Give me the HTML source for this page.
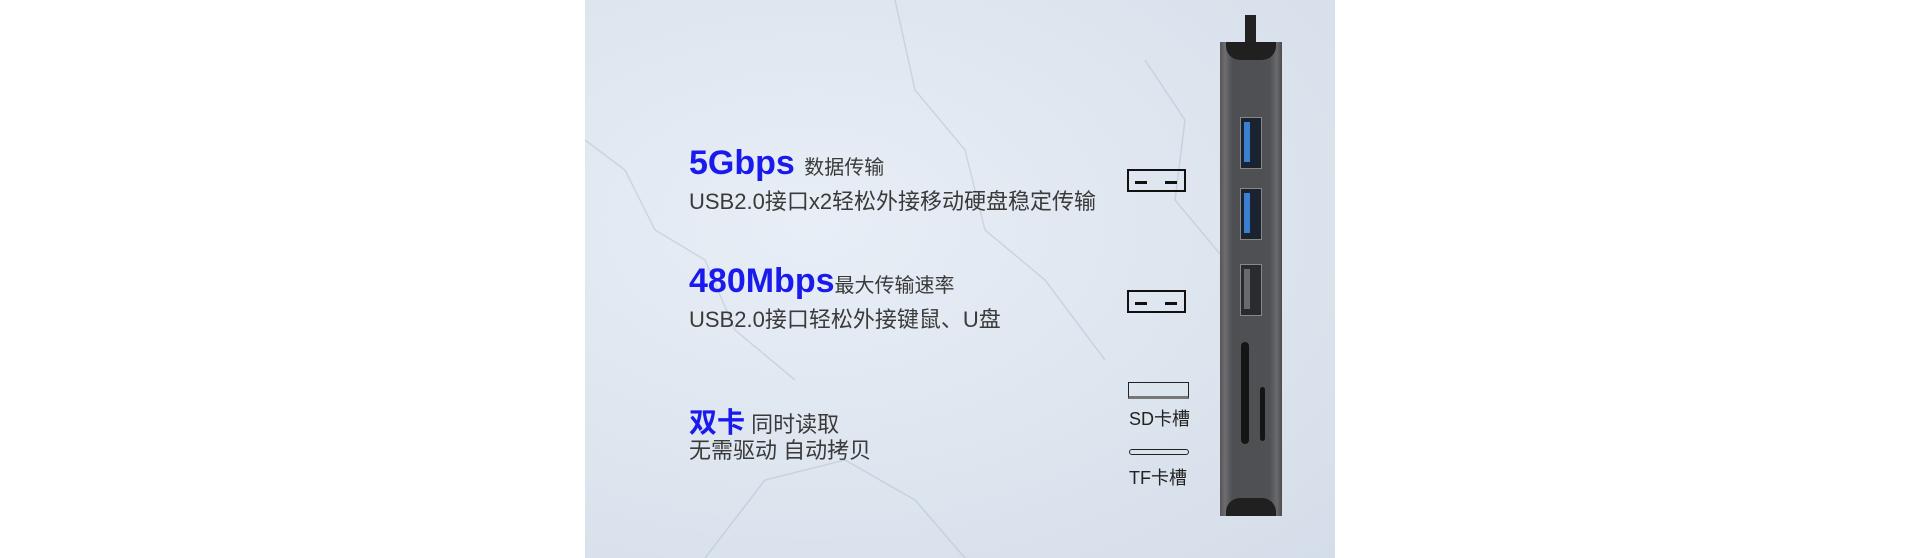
<!DOCTYPE html><html><head><meta charset="utf-8"><style>
body{margin:0;width:1920px;height:558px;background:#fff;position:relative;overflow:hidden;font-family:"Liberation Sans","Noto Sans CJK SC",sans-serif}
#p{position:absolute;left:585px;top:0;width:750px;height:558px;background:radial-gradient(ellipse at 30% 40%,#e8eef6,#dce4ee 60%,#d4dde9);overflow:hidden}
.t{position:absolute;white-space:nowrap;color:#3a3a3a}
.b{color:#1a1aee;font-weight:bold}
.a{position:absolute}
</style></head><body>
<div id="p">
<svg width="750" height="558" style="position:absolute;left:0;top:0" opacity="0.5">
<path d="M0 140 L40 170 L70 230 L120 260 L150 330 L210 380" stroke="#b4bfcd" fill="none" stroke-width="1.5"/>
<path d="M310 0 L330 90 L380 150 L400 230 L460 280 L520 360" stroke="#b4bfcd" fill="none" stroke-width="1.5"/>
<path d="M120 558 L180 480 L260 460 L330 500 L380 558" stroke="#b4bfcd" fill="none" stroke-width="1.5"/>
<path d="M560 60 L600 120 L590 200 L640 260" stroke="#b4bfcd" fill="none" stroke-width="1.5"/>
</svg>
</div>
<div class="t" style="left:689px;top:144px;font-size:34px"><span class="b">5Gbps</span> <span style="font-size:20px">数据传输</span></div>
<div class="t" style="left:689px;top:184px;font-size:22px">USB2.0接口x2轻松外接移动硬盘稳定传输</div>
<div class="t" style="left:689px;top:262px;font-size:34px"><span class="b">480Mbps</span><span style="font-size:20px">最大传输速率</span></div>
<div class="t" style="left:689px;top:302px;font-size:22px">USB2.0接口轻松外接键鼠、U盘</div>
<div class="t" style="left:689px;top:401px;font-size:22px"><span class="b" style="font-size:28px">双卡</span> 同时读取</div>
<div class="t" style="left:689px;top:433px;font-size:22px">无需驱动 自动拷贝</div>
<div class="a" style="left:1127px;top:169px;width:55px;height:19px;border:2px solid #111"><div class="a" style="left:6px;top:10px;width:12px;height:3px;background:#111"></div><div class="a" style="left:36px;top:10px;width:12px;height:3px;background:#111"></div></div>
<div class="a" style="left:1127px;top:290px;width:55px;height:19px;border:2px solid #111"><div class="a" style="left:6px;top:10px;width:12px;height:3px;background:#111"></div><div class="a" style="left:36px;top:10px;width:12px;height:3px;background:#111"></div></div>
<div class="a" style="left:1128px;top:382px;width:59px;height:13px;border:1px solid #222;border-bottom:3px solid #777"></div>
<div class="t" style="left:1129px;top:405px;font-size:18px;color:#222">SD卡槽</div>
<div class="a" style="left:1129px;top:449px;width:58px;height:4px;border:1px solid #222;border-radius:3px"></div>
<div class="t" style="left:1129px;top:464px;font-size:18px;color:#222">TF卡槽</div>
<div class="a" style="left:1245px;top:15px;width:11px;height:30px;background:#222"></div>
<div class="a" style="left:1220px;top:42px;width:62px;height:474px;background:linear-gradient(90deg,#555 0,#6e6e72 8%,#4e4f53 20%,#505155 80%,#6a6a6e 92%,#4a4a4a)"></div>
<div class="a" style="left:1226px;top:42px;width:50px;height:18px;background:#202020;border-radius:0 0 14px 14px"></div>
<div class="a" style="left:1226px;top:498px;width:50px;height:18px;background:#202020;border-radius:14px 14px 0 0"></div>
<div class="a" style="left:1240px;top:117px;width:20px;height:50px;background:#1c2330;border:1px solid #888"><div class="a" style="left:3px;top:4px;width:6px;height:40px;background:#3b7fd0"></div></div>
<div class="a" style="left:1240px;top:188px;width:20px;height:50px;background:#1c2330;border:1px solid #888"><div class="a" style="left:3px;top:4px;width:6px;height:40px;background:#3b7fd0"></div></div>
<div class="a" style="left:1240px;top:264px;width:20px;height:50px;background:#2a2b2e;border:1px solid #888"><div class="a" style="left:3px;top:4px;width:6px;height:40px;background:#6a6a6e"></div></div>
<div class="a" style="left:1241px;top:342px;width:8px;height:102px;background:#151515;border-radius:4px"></div>
<div class="a" style="left:1260px;top:387px;width:5px;height:54px;background:#151515;border-radius:3px"></div>
</body></html>
